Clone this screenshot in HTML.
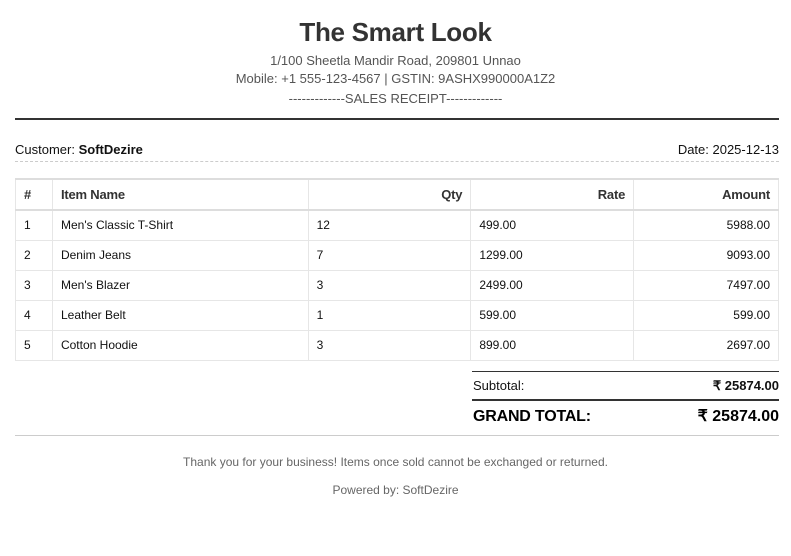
<!DOCTYPE html>
<html><head><meta charset="utf-8"><style>
*{margin:0;padding:0;box-sizing:border-box}
body{width:791px;height:556px;background:#fff;font-family:"Liberation Sans",Arial,sans-serif;color:#333;position:relative;overflow:hidden}
.a{position:absolute}
.c{left:0;width:791px;text-align:center}
h1{font-size:26px;font-weight:bold;color:#333;letter-spacing:-0.3px}
.sm{font-size:13px;color:#555}
table{position:absolute;left:15px;top:178px;width:764px;border-collapse:collapse;font-size:12px;color:#111}
th,td{border:1px solid #e6e6e6;height:30px;padding:0 8px;text-align:left}
th{font-size:13px;font-weight:bold;color:#333;border-top:2px solid #ddd;border-bottom:2px solid #ddd;height:31px;letter-spacing:-0.2px}
.r{text-align:right}
</style></head><body>
<div class="a c" style="top:17px"><h1>The Smart Look</h1></div>
<div class="a c sm" style="top:53px">1/100 Sheetla Mandir Road, 209801 Unnao</div>
<div class="a c sm" style="top:71px">Mobile: +1 555-123-4567 | GSTIN: 9ASHX990000A1Z2</div>
<div class="a c sm" style="top:91px">-------------SALES RECEIPT-------------</div>
<div class="a" style="left:15px;top:118px;width:764px;height:2px;background:#333"></div>
<div class="a" style="left:15px;top:142px;font-size:13px;color:#111">Customer: <b>SoftDezire</b></div>
<div class="a" style="right:12px;top:142px;font-size:13px;color:#111">Date: 2025-12-13</div>
<div class="a" style="left:15px;top:161px;width:764px;border-top:1px dashed #ccc"></div>
<table>
<colgroup><col style="width:37px"><col style="width:256px"><col style="width:163px"><col style="width:163px"><col style="width:145px"></colgroup>
<tr><th>#</th><th>Item Name</th><th class="r">Qty</th><th class="r">Rate</th><th class="r">Amount</th></tr>
<tr><td>1</td><td>Men's Classic T-Shirt</td><td>12</td><td>499.00</td><td class="r">5988.00</td></tr>
<tr><td>2</td><td>Denim Jeans</td><td>7</td><td>1299.00</td><td class="r">9093.00</td></tr>
<tr><td>3</td><td>Men's Blazer</td><td>3</td><td>2499.00</td><td class="r">7497.00</td></tr>
<tr><td>4</td><td>Leather Belt</td><td>1</td><td>599.00</td><td class="r">599.00</td></tr>
<tr><td>5</td><td>Cotton Hoodie</td><td>3</td><td>899.00</td><td class="r">2697.00</td></tr>
</table>
<div class="a" style="left:472px;top:371px;width:307px;height:1px;background:#333"></div>
<div class="a" style="left:473px;top:378px;font-size:13px;line-height:16px;color:#111">Subtotal:</div>
<div class="a" style="right:12px;top:378px;font-size:13px;line-height:16px;font-weight:bold;color:#111">₹ 25874.00</div>
<div class="a" style="left:472px;top:399px;width:307px;height:2px;background:#333"></div>
<div class="a" style="left:473px;top:407px;font-size:16px;line-height:20px;font-weight:bold;color:#000;letter-spacing:-0.2px">GRAND TOTAL:</div>
<div class="a" style="right:12px;top:407px;font-size:16px;line-height:20px;font-weight:bold;color:#000">₹ 25874.00</div>
<div class="a" style="left:15px;top:435px;width:764px;height:1px;background:#ccc"></div>
<div class="a c" style="top:455px;font-size:12px;color:#666">Thank you for your business! Items once sold cannot be exchanged or returned.</div>
<div class="a c" style="top:483px;font-size:12px;color:#666">Powered by: SoftDezire</div>
</body></html>
